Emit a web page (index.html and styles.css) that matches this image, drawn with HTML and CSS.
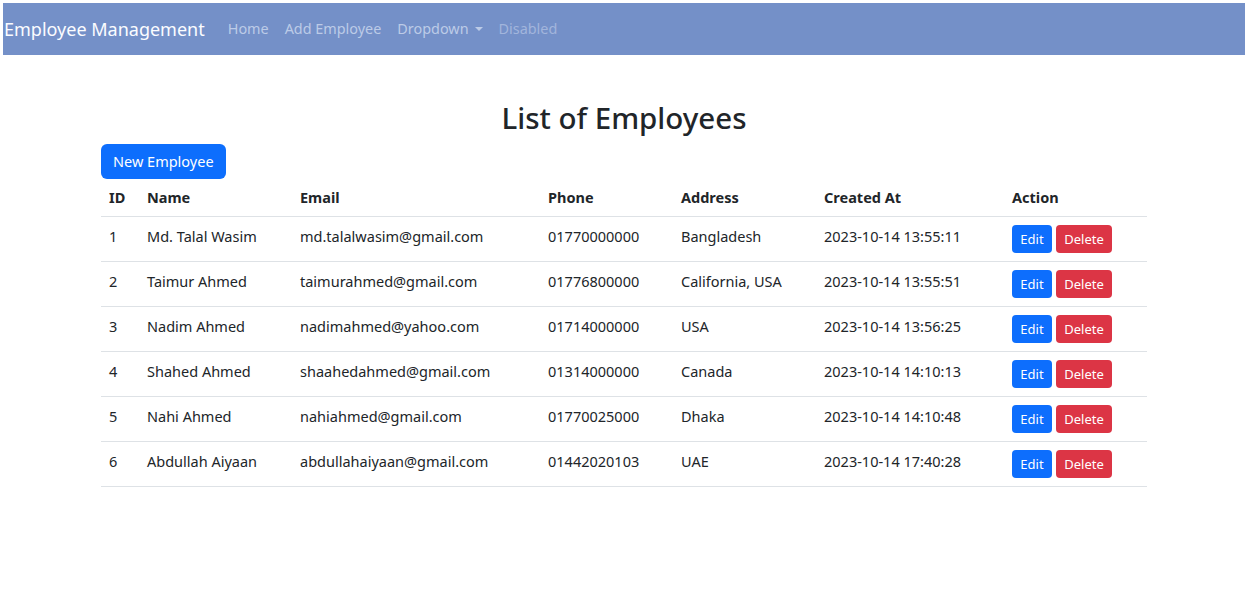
FILE: index.html
```html
<!DOCTYPE html>
<html lang="en">
<head>
<meta charset="utf-8">
<title>Employee Management</title>
<link rel="stylesheet" href="styles.css">
</head>
<body>
<nav class="navbar">
  <a class="brand" href="#">Employee Management</a>
  <ul class="nav">
    <li><a class="nav-link" href="#">Home</a></li>
    <li><a class="nav-link" href="#">Add Employee</a></li>
    <li><a class="nav-link dropdown" href="#">Dropdown<span class="caret"></span></a></li>
    <li><a class="nav-link disabled" href="#">Disabled</a></li>
  </ul>
</nav>
<main class="container">
  <h2 class="title">List of Employees</h2>
  <a class="btn btn-primary" href="#">New Employee</a>
  <table class="table">
    <colgroup>
      <col class="c-id"><col class="c-name"><col class="c-email"><col class="c-phone"><col class="c-addr"><col class="c-created"><col class="c-action">
    </colgroup>
    <thead>
      <tr><th>ID</th><th>Name</th><th>Email</th><th>Phone</th><th>Address</th><th>Created At</th><th>Action</th></tr>
    </thead>
    <tbody>
      <tr><td>1</td><td>Md. Talal Wasim</td><td>md.talalwasim@gmail.com</td><td>01770000000</td><td>Bangladesh</td><td>2023-10-14 13:55:11</td><td class="actions"><a class="btn-sm edit" href="#">Edit</a><a class="btn-sm delete" href="#">Delete</a></td></tr>
      <tr><td>2</td><td>Taimur Ahmed</td><td>taimurahmed@gmail.com</td><td>01776800000</td><td>California, USA</td><td>2023-10-14 13:55:51</td><td class="actions"><a class="btn-sm edit" href="#">Edit</a><a class="btn-sm delete" href="#">Delete</a></td></tr>
      <tr><td>3</td><td>Nadim Ahmed</td><td>nadimahmed@yahoo.com</td><td>01714000000</td><td>USA</td><td>2023-10-14 13:56:25</td><td class="actions"><a class="btn-sm edit" href="#">Edit</a><a class="btn-sm delete" href="#">Delete</a></td></tr>
      <tr><td>4</td><td>Shahed Ahmed</td><td>shaahedahmed@gmail.com</td><td>01314000000</td><td>Canada</td><td>2023-10-14 14:10:13</td><td class="actions"><a class="btn-sm edit" href="#">Edit</a><a class="btn-sm delete" href="#">Delete</a></td></tr>
      <tr><td>5</td><td>Nahi Ahmed</td><td>nahiahmed@gmail.com</td><td>01770025000</td><td>Dhaka</td><td>2023-10-14 14:10:48</td><td class="actions"><a class="btn-sm edit" href="#">Edit</a><a class="btn-sm delete" href="#">Delete</a></td></tr>
      <tr><td>6</td><td>Abdullah Aiyaan</td><td>abdullahaiyaan@gmail.com</td><td>01442020103</td><td>UAE</td><td>2023-10-14 17:40:28</td><td class="actions"><a class="btn-sm edit" href="#">Edit</a><a class="btn-sm delete" href="#">Delete</a></td></tr>
    </tbody>
  </table>
</main>
</body>
</html>
```
FILE: styles.css
```css
* { box-sizing: border-box; }
html, body { margin: 0; padding: 0; background: #fff; }
body {
  padding: 3px 2px 0 3px;
  font-family: "Noto Sans", "Open Sans", sans-serif;
  font-size: 14.5px;
  color: #212529;
}
a { text-decoration: none; }

.navbar {
  display: flex;
  align-items: center;
  height: 52px;
  background: #7490c8;
  padding: 0 0 0 1px;
}
.brand {
  color: #fbfcff;
  font-size: 18px;
  margin-right: 15px;
  line-height: 26px;
}
.nav {
  display: flex;
  list-style: none;
  margin: 0;
  padding: 0;
}
.nav-link {
  display: flex;
  align-items: center;
  color: #bccbe7;
  font-size: 14.4px;
  padding: 7px 8px;
  line-height: 22px;
}
.nav-link.disabled { color: #a2b5dc; }
.caret {
  display: inline-block;
  margin-left: 6px;
  width: 0; height: 0;
  border-left: 4px solid transparent;
  border-right: 4px solid transparent;
  border-top: 4px solid #bccbe7;
}

.container {
  width: 1046px;
  margin: 0 auto;
}
.title {
  text-align: center;
  font-size: 29.5px;
  font-weight: 500;
  line-height: 36px;
  margin: 45px 0 8px;
}
.btn {
  display: inline-block;
  border-radius: 6px;
  font-size: 14.5px;
  line-height: 21px;
  padding: 7px 12px;
}
.btn-primary { background: #0d6efd; color: #fff; }

.table {
  width: 100%;
  border-collapse: collapse;
  table-layout: fixed;
  margin-top: 0;
}
.c-id { width: 38px; }
.c-name { width: 153px; }
.c-email { width: 248px; }
.c-phone { width: 133px; }
.c-addr { width: 143px; }
.c-created { width: 188px; }
.c-action { width: 143px; }
th, td {
  text-align: left;
  padding: 0 8px;
  border-bottom: 1px solid #dee2e6;
  white-space: nowrap;
}
th {
  font-weight: 700;
  height: 37px;
  vertical-align: middle;
  padding-bottom: 1px;
}
td {
  height: 45px;
  vertical-align: middle;
  padding-bottom: 6px;
}
td.actions { padding-bottom: 0; padding-top: 1px; }
.btn-sm {
  display: inline-block;
  font-size: 13px;
  line-height: 20px;
  border-radius: 4px;
  color: #fff;
  vertical-align: middle;
  text-align: center;
  padding: 4px 0;
}
.btn-sm + .btn-sm { margin-left: 4px; }
.edit { background: #0d6efd; width: 40px; }
.delete { background: #dc3545; width: 56px; }
```
